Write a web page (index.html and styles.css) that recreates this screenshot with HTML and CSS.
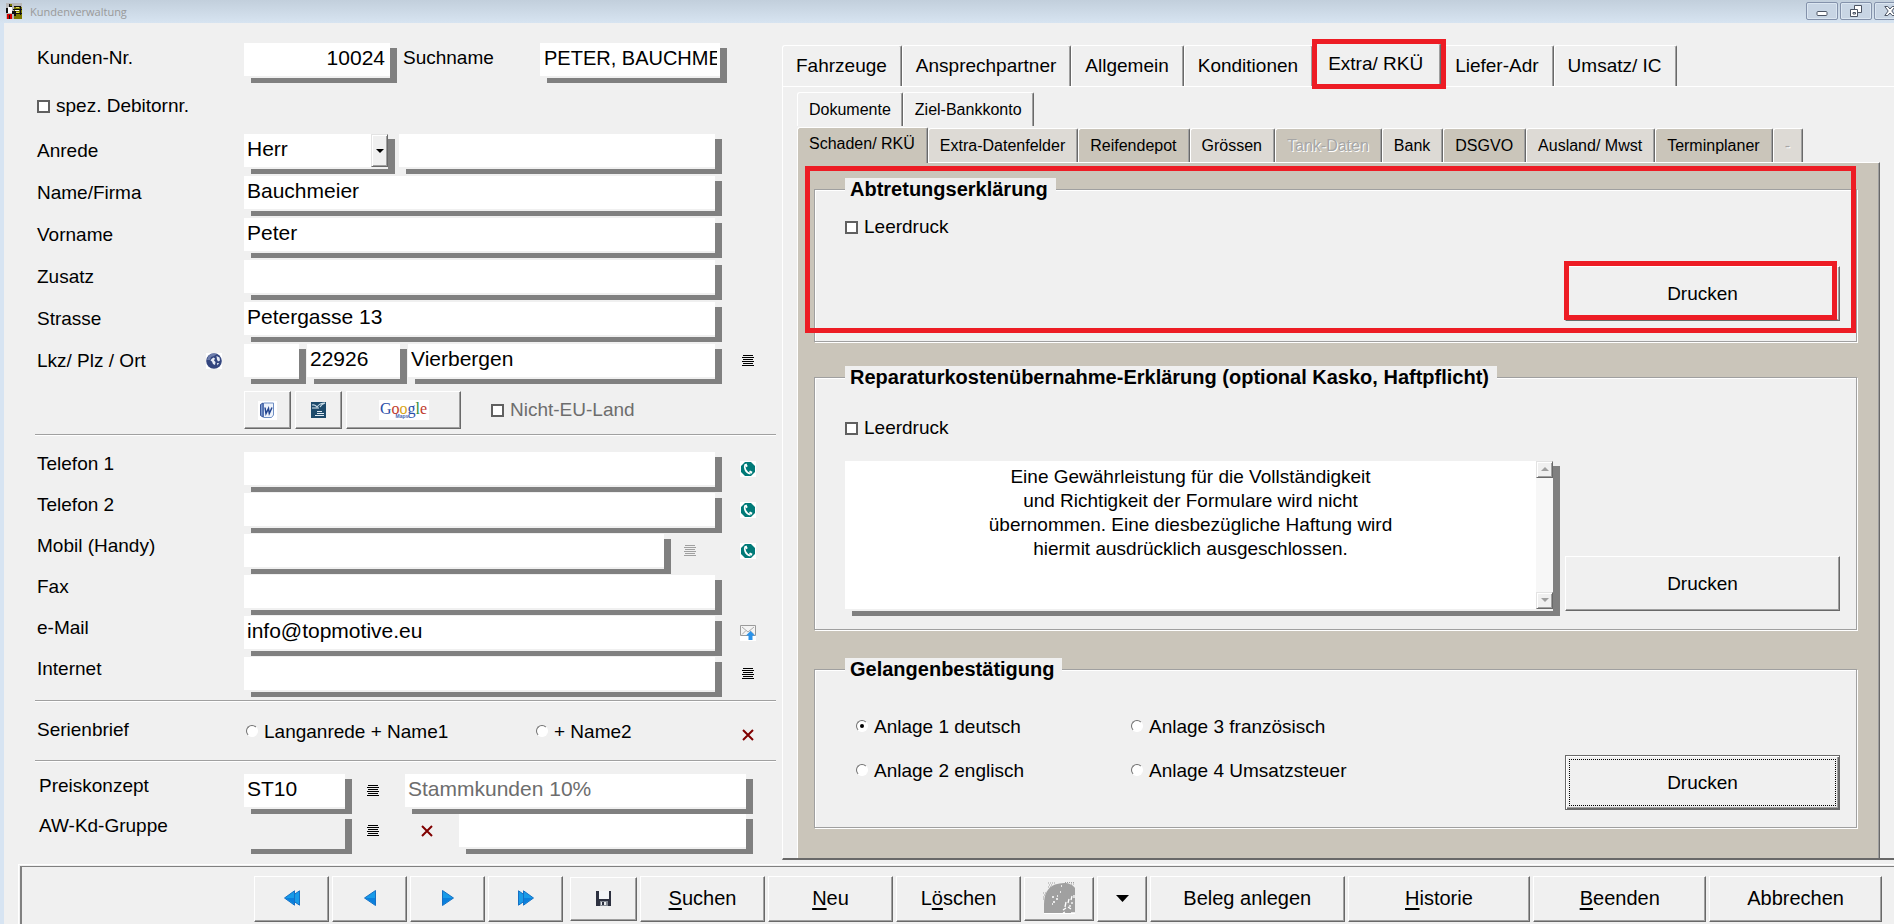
FILE: index.html
```html
<!DOCTYPE html>
<html lang="de">
<head>
<meta charset="utf-8">
<title>Kundenverwaltung</title>
<link rel="stylesheet" href="styles.css">
</head>
<body>
<svg class="defs" aria-hidden="true">
  <symbol id="i-list" viewBox="0 0 12 11"><path d="M1 .5h10M0 2.5h12M1 4.5h10M0 6.5h12M1 8.5h10M0 10.5h12" stroke="currentColor" fill="none"/></symbol>
  <symbol id="i-x" viewBox="0 0 12 12"><path d="M1 1l10 10M11 1L1 11" stroke="#800000" stroke-width="2" fill="none"/></symbol>
  <symbol id="i-phone" viewBox="0 0 16 16"><path fill="#fff" d="M0 0h16v16H0z"/><path fill="#007a78" d="M5 1h6l4 4v6l-4 4H5l-4-4V5z"/><path d="M5.2 3.6C4 6 5 11.500 10.500 12.600" stroke="#fff" stroke-width="1.700" fill="none"/><path fill="#fff" d="M4.600 3.200l1.900-.7 1.200 2.800-1.600.9zM9 10.900l1-1.400 2.500 1.300-.8 1.900z"/></symbol>
  <symbol id="i-prev" viewBox="0 0 12 16"><path d="M11.500.5v15L.5 8z" fill="#189be8" stroke="#1670c4"/><path d="M11 8v6.500L1.500 8z" fill="#0b7fdc"/></symbol>
  <symbol id="i-first" viewBox="0 0 16 16"><path d="M15.500.8v14.400L5 8z" fill="#189be8" stroke="#1670c4"/><path d="M10.500.8v14.400L.5 8z" fill="#189be8" stroke="#1670c4"/><path d="M10 8v6L1.500 8z" fill="#0b7fdc"/></symbol>
</svg>

<header class="titlebar">
  <svg class="app-icon" viewBox="0 0 16 16" aria-hidden="true"><path fill="#b8b8b8" d="M0 0h16v16H0z"/><path fill="#7d7a00" d="M8 4h8v12H8z"/><path fill="#111" d="M3 1h3v3H3zM8 3h7v1H8zM7 6h9v1H7zM8 10h8v1H8zM14 4h1v8h-1zM0 5h2v5H0zM6 8h4v5H8v-2H6z"/><path fill="#7d7a00" d="M4 1h2v2H4z"/><path fill="#fff" d="M2 4h4v6H2zM9 7h4v1H9z"/><path fill="#e8e060" d="M10 4h3v1h-3zM10 9h3v1h-3z"/><path fill="#d40000" d="M1 11h5v5H1z"/><path fill="#111" d="M3 12h1v4H3z"/></svg>
  <h1 class="title">Kundenverwaltung</h1>
  <div class="win-buttons">
    <button class="win-button" aria-label="Minimieren"><svg viewBox="0 0 12 12"><rect x="1" y="6.500" width="10" height="4" rx="1" fill="#fff" stroke="#4c5564"/></svg></button>
    <button class="win-button" aria-label="Wiederherstellen"><svg viewBox="0 0 12 12"><path d="M4.500.5h7v7h-7z" fill="#fff" stroke="#4c5564"/><path d="M.5 4.500h7v7h-7z" fill="#fff" stroke="#4c5564"/><path d="M3 7.500h2.500v1.500H3z" fill="none" stroke="#4c5564"/></svg></button>
    <button class="win-button" aria-label="Schließen"><svg viewBox="0 0 12 12"><path d="M.8 1.500h3L6 4l2.200-2.500h3L7.800 6l3.400 4.500h-3L6 8l-2.200 2.500h-3L4.200 6z" fill="#fff" stroke="#4c5564"/></svg></button>
  </div>
</header>

<main class="window">
  <div class="panes">
    <form class="customer">
      <div class="row row-key">
        <label class="label" for="nr">Kunden-Nr.</label>
        <div class="cells">
          <input class="field field-nr" id="nr" value="10024">
          <label class="label label-search" for="such">Suchname</label>
          <input class="field field-search" id="such" value="PETER, BAUCHMEIER">
        </div>
      </div>
      <div class="row-check"><label class="check"><input type="checkbox">spez. Debitornr.</label></div>

      <div class="address">
        <div class="row">
          <label class="label" for="anrede">Anrede</label>
          <div class="cells cells-wide">
            <div class="combo"><select class="field" id="anrede"><option>Herr</option></select><span class="combo-arrow" aria-hidden="true"></span></div>
            <input class="field" aria-label="Anrede Zusatz">
          </div>
        </div>
        <div class="row"><label class="label" for="name">Name/Firma</label><input class="field" id="name" value="Bauchmeier"></div>
        <div class="row"><label class="label" for="vorname">Vorname</label><input class="field" id="vorname" value="Peter"></div>
        <div class="row"><label class="label" for="zusatz">Zusatz</label><input class="field" id="zusatz"></div>
        <div class="row"><label class="label" for="strasse">Strasse</label><input class="field" id="strasse" value="Petergasse 13"></div>
        <div class="row">
          <div class="label label-globe"><label for="ort">Lkz/ Plz / Ort</label>
            <button type="button" class="icon-button" aria-label="Karte"><svg width="16" height="16" viewBox="0 0 16 16"><path fill="#fff" d="M0 0h16v16H0z"/><circle cx="8" cy="8" r="7.800" fill="#34467f"/><path fill="#8493bd" d="M2 4a7.500 7.500 0 0 1 9-3L8 3 5 4 4 7 1 7z" opacity=".7"/><path fill="#e6ebf5" d="M5.500 6l2-1.500 1.500 1-1 2 1.500 1.500-.5 3-2-1-1-2.500-1.500-1zM10.500 3l3 1.500.5 3-2 1-1-2zM11 10h2l-1.500 2.500z"/></svg></button>
          </div>
          <div class="cells cells-place">
            <input class="field field-lkz" aria-label="Lkz">
            <input class="field field-plz" aria-label="Plz" value="22926">
            <input class="field" id="ort" value="Vierbergen">
          </div>
          <button type="button" class="icon-button" aria-label="Ortsliste"><svg width="12" height="11"><use href="#i-list"/></svg></button>
        </div>
      </div>

      <div class="tools">
        <button type="button" class="button tool" aria-label="Word"><svg width="19" height="19" viewBox="0 0 19 19"><path fill="#fff" d="M0 0h19v19H0z"/><path d="M5.500 2h10v12l-2 2.500h-8z" fill="#eef3fb" stroke="#6f8fc4"/><path d="M2.500 3.500L5 2v14l-2.500-1.500z" fill="#7f9cd0" stroke="#39579b"/><path d="M7 6.500l1 6 2.500-5 .8 5L14 6.500" fill="none" stroke="#23458f" stroke-width="1.500"/></svg></button>
        <button type="button" class="button tool" aria-label="OpenOffice"><svg width="15" height="16" viewBox="0 0 15 16"><path fill="#1d4a6b" d="M0 0h15v16H0z"/><path d="M1 3c3-1 4 1 5 2 2-3 4-4 8-4-3 1-4 2-5 4" fill="none" stroke="#c9dce8" stroke-width="1.200"/><path d="M1 6h7M6 9.500h5M6 11.500h7M4 13.500h9" stroke="#dfeaf2"/></svg></button>
        <button type="button" class="button tool-google" aria-label="Google Maps"><span class="google"><span class="g-blue">G</span><span class="g-red">o</span><span class="g-yellow">o</span><span class="g-blue">g</span><span class="g-green">l</span><span class="g-red">e</span><span class="g-maps">Maps</span></span></button>
        <label class="check check-muted"><input type="checkbox">Nicht-EU-Land</label>
      </div>

      <hr class="rule">

      <div class="contact">
        <div class="row"><label class="label" for="tel1">Telefon 1</label><input class="field" id="tel1"><button type="button" class="icon-button" aria-label="Telefon 1 anrufen"><svg width="16" height="16"><use href="#i-phone"/></svg></button></div>
        <div class="row"><label class="label" for="tel2">Telefon 2</label><input class="field" id="tel2"><button type="button" class="icon-button" aria-label="Telefon 2 anrufen"><svg width="16" height="16"><use href="#i-phone"/></svg></button></div>
        <div class="row"><label class="label" for="mobil">Mobil (Handy)</label>
          <div class="cells cells-mobile"><input class="field" id="mobil"><button type="button" class="icon-button" disabled aria-label="Mobilliste"><svg width="12" height="11"><use href="#i-list"/></svg></button></div>
          <button type="button" class="icon-button" aria-label="Mobil anrufen"><svg width="16" height="16"><use href="#i-phone"/></svg></button></div>
        <div class="row"><label class="label" for="fax">Fax</label><input class="field" id="fax"></div>
        <div class="row"><label class="label" for="mail">e-Mail</label><input class="field" id="mail" value="info@topmotive.eu"><button type="button" class="icon-button" aria-label="e-Mail senden"><svg width="16" height="16" viewBox="0 0 16 16"><path fill="#fff" d="M0 8h16v8H0z"/><path d="M.5.5h15v10H.5z" fill="#f4f4f4" stroke="#9a9a9a"/><path d="M2 2l6 5 6-5M2 9.500l4-4M14 9.500l-4-4" fill="none" stroke="#aaa"/><path d="M10.500 6L15 10.500h-2.500V15h-4v-4.500H6z" fill="#2b93ea"/></svg></button></div>
        <div class="row"><label class="label" for="web">Internet</label><input class="field" id="web"><button type="button" class="icon-button" aria-label="Internetliste"><svg width="12" height="11"><use href="#i-list"/></svg></button></div>
      </div>

      <hr class="rule">

      <div class="row row-letter">
        <span class="label">Serienbrief</span>
        <div class="letter-options">
          <label class="radio"><input type="radio" name="brief">Langanrede + Name1</label>
          <label class="radio"><input type="radio" name="brief">+ Name2</label>
        </div>
        <button type="button" class="icon-button" aria-label="Serienbrief löschen"><svg width="12" height="12"><use href="#i-x"/></svg></button>
      </div>

      <hr class="rule">

      <div class="pricing">
        <div class="row">
          <label class="label" for="preis">Preiskonzept</label>
          <div class="cells">
            <input class="field field-code" id="preis" value="ST10">
            <button type="button" class="icon-button icon-next" aria-label="Preiskonzepte"><svg width="12" height="11"><use href="#i-list"/></svg></button>
            <input class="field field-muted" aria-label="Bezeichnung Preiskonzept" value="Stammkunden 10%">
          </div>
        </div>
        <div class="row">
          <label class="label" for="gruppe">AW-Kd-Gruppe</label>
          <div class="cells">
            <input class="field field-code field-plain" id="gruppe">
            <button type="button" class="icon-button icon-next" aria-label="Gruppen"><svg width="12" height="11"><use href="#i-list"/></svg></button>
            <button type="button" class="icon-button icon-clear" aria-label="Gruppe löschen"><svg width="12" height="12"><use href="#i-x"/></svg></button>
            <input class="field" aria-label="Bezeichnung Gruppe">
          </div>
        </div>
      </div>
    </form>

    <section class="book">
      <div class="tabs tabs-main" role="tablist">
        <button class="tab" role="tab">Fahrzeuge</button>
        <button class="tab" role="tab">Ansprechpartner</button>
        <button class="tab" role="tab">Allgemein</button>
        <button class="tab" role="tab">Konditionen</button>
        <button class="tab tab-active marked" role="tab" aria-selected="true">Extra/ RKÜ</button>
        <button class="tab" role="tab">Liefer-Adr</button>
        <button class="tab" role="tab">Umsatz/ IC</button>
      </div>
      <div class="page">
        <div class="tabs tabs-sub" role="tablist">
          <button class="tab" role="tab">Dokumente</button>
          <button class="tab" role="tab">Ziel-Bankkonto</button>
        </div>
        <div class="tabs tabs-sub tabs-tinted" role="tablist">
          <button class="tab tab-dark tab-active" role="tab" aria-selected="true">Schaden/ RKÜ</button>
          <button class="tab" role="tab">Extra-Datenfelder</button>
          <button class="tab tab-dark" role="tab">Reifendepot</button>
          <button class="tab" role="tab">Grössen</button>
          <button class="tab tab-dark" role="tab" disabled>Tank-Daten</button>
          <button class="tab" role="tab">Bank</button>
          <button class="tab tab-dark" role="tab">DSGVO</button>
          <button class="tab" role="tab">Ausland/ Mwst</button>
          <button class="tab tab-dark" role="tab">Terminplaner</button>
          <button class="tab" role="tab" disabled>-</button>
        </div>
        <div class="sheet">
          <div class="marked marked-group">
            <fieldset class="group">
              <legend>Abtretungserklärung</legend>
              <div class="group-body body-assign">
                <label class="check"><input type="checkbox">Leerdruck</label>
                <button class="button print marked">Drucken</button>
              </div>
            </fieldset>
          </div>
          <fieldset class="group">
            <legend>Reparaturkostenübernahme-Erklärung (optional Kasko, Haftpflicht)</legend>
            <div class="group-body body-repair">
              <label class="check"><input type="checkbox">Leerdruck</label>
              <div class="note-row">
                <div class="note">
                  <textarea aria-label="Hinweistext">Eine Gewährleistung für die Vollständigkeit
und Richtigkeit der Formulare wird nicht
übernommen. Eine diesbezügliche Haftung wird
hiermit ausdrücklich ausgeschlossen.</textarea>
                  <div class="scroll">
                    <button class="scroll-button" aria-label="Nach oben"><svg width="8" height="5" viewBox="0 0 8 5"><path d="M4 0l4 4H0z" fill="#a0a0a0"/></svg></button>
                    <button class="scroll-button" aria-label="Nach unten"><svg width="8" height="5" viewBox="0 0 8 5"><path d="M0 0h8L4 4z" fill="#a0a0a0"/></svg></button>
                  </div>
                </div>
                <button class="button print">Drucken</button>
              </div>
            </div>
          </fieldset>
          <fieldset class="group">
            <legend>Gelangenbestätigung</legend>
            <div class="group-body body-arrival">
              <div class="options">
                <label class="radio"><input type="radio" name="anlage" checked>Anlage 1 deutsch</label>
                <label class="radio"><input type="radio" name="anlage">Anlage 3 französisch</label>
                <label class="radio"><input type="radio" name="anlage">Anlage 2 englisch</label>
                <label class="radio"><input type="radio" name="anlage">Anlage 4 Umsatzsteuer</label>
              </div>
              <button class="button print print-focus">Drucken</button>
            </div>
          </fieldset>
        </div>
      </div>
    </section>
  </div>

  <footer class="bar">
    <div class="bar-inner">
      <button class="button nav" aria-label="Erster"><svg width="16" height="16"><use href="#i-first"/></svg></button>
      <button class="button nav" aria-label="Zurück"><svg width="12" height="16"><use href="#i-prev"/></svg></button>
      <button class="button nav" aria-label="Weiter"><svg class="flip" width="12" height="16"><use href="#i-prev"/></svg></button>
      <button class="button nav" aria-label="Letzter"><svg class="flip" width="16" height="16"><use href="#i-first"/></svg></button>
      <button class="button save" aria-label="Speichern"><svg width="15" height="15" viewBox="0 0 15 15"><path fill="#2d3140" d="M0 0h15v15H0z"/><path fill="#f3f5f7" d="M3 0h10v8H3z"/><path fill="#858b94" d="M4 10h8v5H4z"/><path fill="#e8eaec" d="M5 11h5v3H5z"/><path fill="#2d3140" d="M6 11h2v3H6z"/></svg></button>
      <button class="button w-small"><span><u>S</u>uchen</span></button>
      <button class="button w-small"><span><u>N</u>eu</span></button>
      <button class="button w-small"><span>L<u>ö</u>schen</span></button>
      <button class="button photo" disabled aria-label="Bild"><svg width="32" height="32" viewBox="0 0 32 32"><path fill="#fff" d="M1 31V20h31v12H1z"/><path fill="#a0a0a0" d="M1 31V22C1 12 5 5 12 2.500 15 1.500 18 1 21 1c5 0 9 2 11 5v25z"/><path d="M0 11h4M1 13h3M0 15h3M0 17h2M5 5h4M6 3h4M5 1h8M6 7h2M22 .500h9M28 2h4" stroke="#a0a0a0" stroke-dasharray="1 1"/><path d="M9 15h2M13 17h2M14 14h1M10 20h2M9 22h1M18 4h1M17 10h1" stroke="#fff" stroke-width="1.300"/><path d="M31 13v3M29 14l-1 4M26 17l-1 4M29 20v2M23 20l-1 5M27 23v2M25 25l3 2M20 28l3-2M20 31l2-1M28 31h4" stroke="#fff" stroke-width="1.300" fill="none"/></svg></button>
      <button class="button drop" aria-label="Mehr"><svg width="13" height="7" viewBox="0 0 13 7"><path d="M0 0h13L6.500 7z"/></svg></button>
      <button class="button w-large">Beleg anlegen</button>
      <button class="button w-medium"><span><u>H</u>istorie</span></button>
      <button class="button w-normal"><span><u>B</u>eenden</span></button>
      <button class="button w-normal">Abbrechen</button>
    </div>
  </footer>
</main>
</body>
</html>
```
FILE: styles.css
```css
* { box-sizing: border-box; }

:root {
  --face: #f0f0f0;
  --shade: #a0a0a0;
  --dark: #696969;
  --drop: #808080;
  --tan: #cac5ba;
  --tan-light: #dddad5;
  --mark: #ed1c24;
}

body {
  margin: 0;
  min-height: 100vh;
  display: flex;
  flex-direction: column;
  overflow-x: hidden;
  background: var(--face);
  color: #000;
  font: 19px/24px "Liberation Sans", Arial, sans-serif;
}

button, input, select, textarea { font: inherit; color: inherit; margin: 0; }
button { padding: 0; }
svg { display: block; flex: none; }
.defs { position: absolute; width: 0; height: 0; }
.flip { transform: scaleX(-1); }

/* Title bar */
.titlebar {
  display: flex;
  align-items: flex-start;
  height: 23px;
  padding-left: 6px;
  overflow: hidden;
  background: linear-gradient(#c2cfdc, #d7e4f1);
}
.app-icon { width: 16px; height: 16px; margin: 3px 8px 0 0; }
.title { margin: 0; font: 11px/23px "Open Sans", sans-serif; color: #999; }
.win-buttons { display: flex; gap: 2px; margin: 2px -12px 0 auto; }
.win-button {
  display: grid;
  place-items: center;
  width: 32px;
  height: 18px;
  border: 1px solid #8492ab;
  border-radius: 2px;
  background: #c8d5e4;
  box-shadow: inset 0 0 0 1px #dbe6f1;
}
.win-button svg { width: 12px; height: 12px; }

/* Window */
.window {
  flex: 1;
  display: flex;
  flex-direction: column;
  border-left: 4px solid #d7e4f2;
}
.panes {
  flex: 1;
  display: grid;
  grid-template-columns: minmax(0, 778fr) minmax(0, 1112fr);
}

/* Customer form */
.customer { padding: 20px 0 10px; }
.row {
  display: grid;
  grid-template-columns: 207px minmax(0, 1fr) 41px;
  align-items: start;
  height: 42px;
  padding: 0 26px 0 33px;
}
.label { line-height: 34px; white-space: nowrap; }
.field {
  width: 100%;
  min-width: 0;
  height: 35px;
  padding: 0 3px 3px;
  border: 0;
  border-bottom: 2px solid var(--face);
  border-radius: 0;
  outline: 0;
  appearance: none;
  background: #fff;
  background-clip: padding-box;
  box-shadow: 7px 5px 0 var(--drop);
  font-size: 21px;
}
.cells { display: flex; min-width: 0; }
.cells .field { flex: 1; }

.row-key { grid-template-columns: 207px minmax(0, 1fr); padding-right: 62px; }
.row-key .label { line-height: 30px; }
.row-key .cells .field-nr { flex: none; width: 146px; text-align: right; padding-right: 5px; }
.row-key .label-search { width: 137px; margin-left: 13px; }
.field-search { font-size: 20px; padding-left: 4px; }

.row-check { display: flex; align-items: center; height: 42px; padding-left: 33px; }

.address { margin-top: 7px; }
.cells-wide { gap: 11px; }
.combo { position: relative; width: 144px; }
.combo-arrow {
  position: absolute;
  top: 0;
  right: 0;
  display: grid;
  place-items: center;
  width: 17px;
  height: 33px;
  background: var(--face);
  border: 1px solid;
  border-color: #e3e3e3 var(--dark) var(--dark) #e3e3e3;
  box-shadow: inset 1px 1px #fff, inset -1px -1px var(--shade);
  pointer-events: none;
}
.combo-arrow::before {
  content: "";
  border: 4px solid transparent;
  border-top-color: #000;
  border-bottom: 0;
}
.cells-place { gap: 8px; }
.cells-place .field-lkz { flex: none; width: 55px; }
.cells-place .field-plz { flex: none; width: 93px; }
.label-globe { display: flex; justify-content: space-between; padding-right: 22px; }

.icon-button {
  display: flex;
  align-items: center;
  justify-content: center;
  justify-self: end;
  width: 16px;
  height: 33px;
  border: 0;
  background: none;
}
.icon-button:disabled { color: var(--shade); }

.button {
  display: flex;
  align-items: center;
  justify-content: center;
  border: 1px solid;
  border-color: #fff var(--dark) var(--dark) #fff;
  background: var(--face);
  box-shadow: inset -1px -1px var(--shade);
}
.tools { display: flex; gap: 4px; height: 38px; margin-top: 5px; padding-left: 240px; }
.tool { width: 47px; }
.tool-google { width: 115px; }
.google {
  position: relative;
  width: 50px;
  height: 20px;
  background: #fff;
  font: 16px/17px "Liberation Serif", serif;
}
.g-blue { color: #2a4fa8; }
.g-red { color: #c0392b; }
.g-yellow { color: #d9a514; }
.g-green { color: #2e8b3a; }
.g-maps {
  position: absolute;
  left: 17px;
  bottom: 1px;
  font: bold 5px/5px "Liberation Sans", sans-serif;
  color: #4a68b5;
}

.check, .radio { display: flex; align-items: center; white-space: nowrap; }
.check input {
  appearance: none;
  width: 13px;
  height: 13px;
  margin-right: 6px;
  border: 2px solid #606060;
  background: #fff;
}
.check-muted { margin-left: 26px; color: #6d6d6d; }
.radio input {
  appearance: none;
  display: grid;
  place-items: center;
  width: 12px;
  height: 12px;
  margin: 0 6px 3px 0;
  border: 1px solid;
  border-color: #707070 #fff #fff #707070;
  border-radius: 50%;
  background: #fff;
}
.radio input:checked::before {
  content: "";
  width: 4px;
  height: 4px;
  border-radius: 50%;
  background: #000;
}

.rule {
  height: 2px;
  margin: 5px 6px 0 31px;
  border: 0;
  border-top: 1px solid var(--shade);
  background: #fff;
}
.contact { margin-top: 16px; }
.contact .row { height: 41px; }
.contact .label, .pricing .label { line-height: 24px; }
.contact + .rule { margin-top: 2px; }
.cells-mobile { gap: 18px; padding-right: 17px; }

.row-letter { height: 58px; align-items: center; }
.row-letter + .rule { margin-top: 0; }
.row-letter .label { padding-bottom: 3px; }
.row-letter .icon-button { padding-top: 8px; }
.letter-options { display: grid; grid-template-columns: 290px 1fr; padding: 2px 0 0 2px; }

.pricing { margin-top: 12px; }
.pricing .row { grid-template-columns: 205px minmax(0, 1fr); height: 40px; padding: 0 36px 0 35px; }
.pricing .cells .field-code { flex: none; width: 101px; }
.field-plain { background-color: var(--face); }
.field-muted { color: #6d6d6d; }
.icon-next { margin: 0 24px 0 20px; }
.icon-clear { margin: 0 24px 0 14px; }

/* Notebook */
.book { display: flex; flex-direction: column; padding: 20px 0 4px; }
.tabs { display: flex; align-items: flex-end; }
.tab {
  height: 41px;
  padding: 0 14px 0 13px;
  border: 1px solid;
  border-color: #fff var(--dark) transparent #fff;
  border-bottom: 0;
  border-radius: 3px 2px 0 0;
  background: var(--face);
  box-shadow: inset -1px 0 var(--shade);
  white-space: nowrap;
}
.tabs-main { height: 43px; }
.tabs-main .tab-active { height: 43px; padding: 0 17px 3px 14px; }
.page {
  flex: 1;
  display: flex;
  flex-direction: column;
  padding: 5px 14px 0;
  border: 1px solid #fff;
  border-width: 1px 0 0 1px;
  border-bottom: 2px solid var(--dark);
}
.tabs-sub { font-size: 16px; }
.tabs-sub .tab { height: 34px; padding: 0 11px; }
.tabs-tinted { height: 36px; border-top: 1px solid var(--face); }
.tabs-tinted .tab { padding-right: 12px; background: var(--tan-light); }
.tabs-tinted .tab-dark { background: var(--tan); }
.tabs-tinted .tab-active { height: 36px; padding-bottom: 3px; margin-bottom: -1px; z-index: 1; }
.tab:disabled { color: #a6a6a6; text-shadow: 1px 1px #fff; }

.sheet {
  flex: 1;
  padding: 15px 22px 0 16px;
  border: 1px solid #fff;
  border-right-color: var(--dark);
  border-bottom: 0;
  background: var(--tan);
  box-shadow: inset -1px 0 var(--shade);
}
.group {
  min-width: 0;
  margin: 0;
  padding: 0;
  border: 1px solid var(--shade);
  background: var(--face);
  box-shadow: inset 1px 1px #fff, 1px 1px #fff;
}
.group + .group { margin-top: 28px; }
.group legend {
  margin-left: 30px;
  padding: 0 8px 0 5px;
  background: var(--face);
  font-size: 20px;
  line-height: 22px;
  font-weight: bold;
}
.group-body { padding: 0 16px 0 30px; }
.body-assign { padding-top: 15px; padding-bottom: 20px; }
.body-repair { padding-top: 28px; padding-bottom: 18px; }
.body-arrival { display: flex; justify-content: space-between; align-items: flex-end; padding-top: 25px; padding-bottom: 17px; }
.print { flex: none; width: 275px; height: 55px; }
.body-assign .print { margin: 27px 0 0 auto; }
.print-focus {
  border-color: var(--dark);
  box-shadow: inset 1px 1px #fff, inset -1px -1px var(--dark), inset -2px -2px var(--shade);
  outline: 1px dotted #000;
  outline-offset: -5px;
}
.note-row { display: flex; align-items: flex-end; gap: 12px; margin-top: 21px; }
.note {
  flex: 1;
  display: flex;
  height: 150px;
  border-bottom: 2px solid var(--face);
  background: #fff;
  background-clip: padding-box;
  box-shadow: 7px 5px 0 var(--drop);
}
.note textarea {
  flex: 1;
  min-width: 0;
  padding: 4px 0 0;
  border: 0;
  outline: 0;
  resize: none;
  overflow: hidden;
  background: none;
  text-align: center;
}
.scroll {
  display: flex;
  flex-direction: column;
  justify-content: space-between;
  width: 17px;
  background: #f7f7f7;
}
.scroll-button {
  display: grid;
  place-items: center;
  height: 17px;
  border: 1px solid;
  border-color: #e3e3e3 var(--dark) var(--dark) #e3e3e3;
  background: var(--face);
  box-shadow: inset 1px 1px #fff, inset -1px -1px var(--shade);
}
.options { display: grid; grid-template-columns: 275px auto; grid-auto-rows: 44px; align-self: flex-start; padding-left: 11px; }
.body-arrival .print { margin-top: 50px; }

/* Red highlight frames */
.marked { position: relative; }
.marked::after {
  content: "";
  position: absolute;
  z-index: 2;
  border: 5px solid var(--mark);
  pointer-events: none;
}
.tab.marked::after { inset: -5px -6px -3px -2px; }
.print.marked::after { inset: -6px 2px 0 -2px; }
.marked-group { margin-bottom: 24px; }
.marked-group::after { inset: -12px 1px 9px -9px; }

/* Bottom bar */
.bar { margin-left: 14px; padding: 1px 0 0 1px; border: 1px solid #fff; border-width: 1px 0 0 1px; }
.bar-inner {
  display: flex;
  align-items: center;
  gap: 3px;
  padding: 9px 12px 2px 232px;
  border: solid var(--drop);
  border-width: 1px 0 0 2px;
  font-size: 20px;
}
.bar .button { height: 46px; padding-bottom: 2px; white-space: nowrap; }
.bar u { text-underline-offset: 3px; }
.bar .nav { width: 75px; }
.bar .save { width: 67px; height: 44px; margin-left: 4px; }
.bar .photo { width: 70px; height: 44px; }
.bar .drop { width: 50px; }
.bar .w-small { flex: 0 1 125px; }
.w-large { flex: 195 0 0; }
.w-medium { flex: 183 0 0; }
.w-normal { flex: 173 0 0; }
```
